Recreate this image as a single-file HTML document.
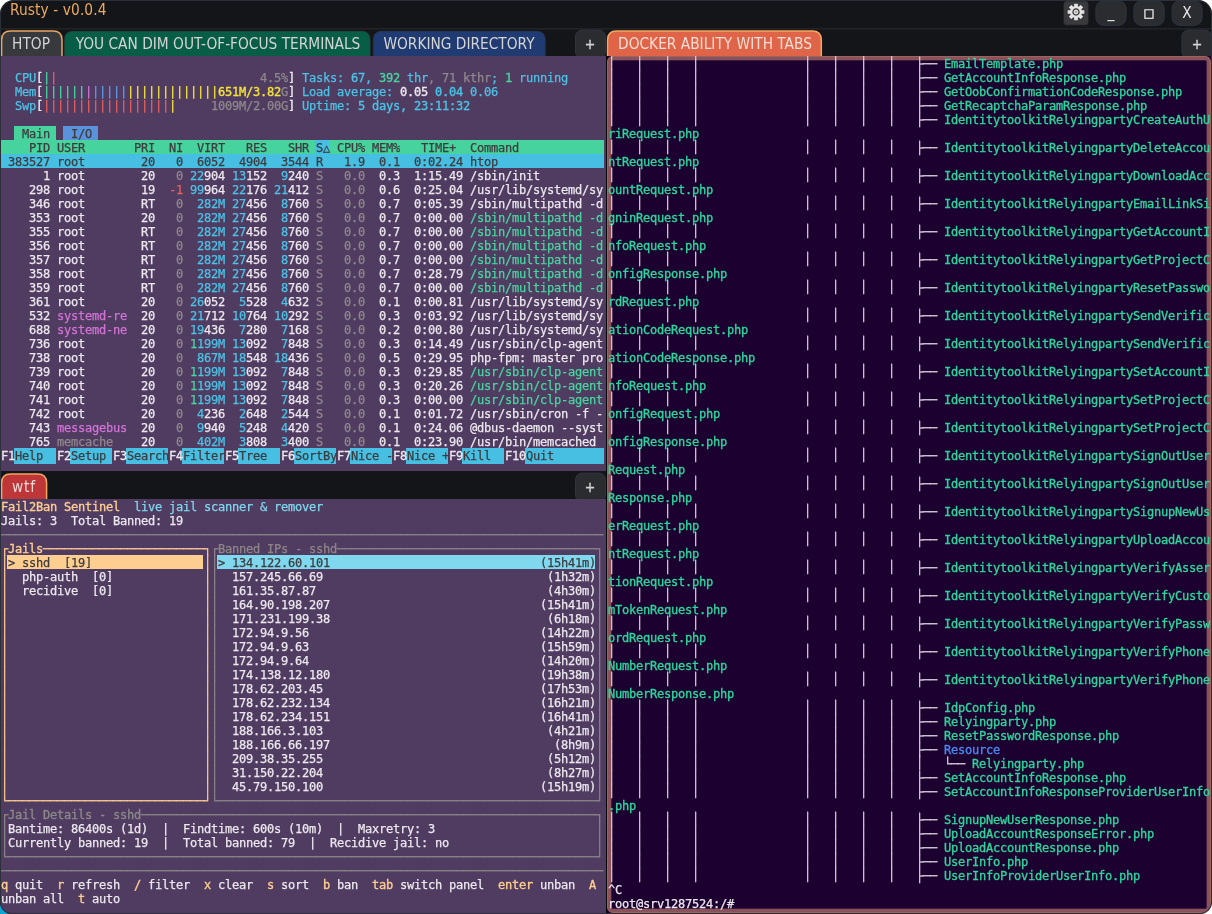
<!DOCTYPE html>
<html lang="en"><head><meta charset="utf-8"><title>Rusty - v0.0.4</title>
<style>
html,body{margin:0;padding:0;background:#fff;}
body{width:1212px;height:914px;position:relative;overflow:hidden;font-family:"DejaVu Sans Condensed","DejaVu Sans","Liberation Sans",sans-serif;}
#corner{position:absolute;left:0;top:894px;width:20px;height:20px;background:#0aa6d6;}
#win{position:absolute;left:0;top:0;width:1212px;height:914px;box-sizing:border-box;background:#141519;border-radius:14px 14px 12px 12px;overflow:hidden;}
#frame{position:absolute;left:0;top:0;width:1212px;height:914px;box-sizing:border-box;border:1px solid #2b303b;border-radius:14px 14px 12px 12px;z-index:50;pointer-events:none;}
#chrome{position:absolute;left:0;top:0;}
#title{will-change:transform;position:absolute;left:10px;top:0;height:20px;line-height:20px;font-size:15.3px;letter-spacing:0.1px;color:#eaa95f;white-space:nowrap;}
.tl{will-change:transform;position:absolute;width:400px;height:25px;line-height:25px;text-align:center;white-space:nowrap;font-size:15.3px;color:#d4d4d4;}
.pl{color:#d4d4d4;letter-spacing:0;font-size:14px;-webkit-text-stroke:0.35px currentColor;}
.wl{color:#e6e6e6;letter-spacing:0;line-height:22px;height:22px;}
.term{position:absolute;overflow:hidden;will-change:transform;font-family:"DejaVu Sans Mono","Liberation Mono",monospace;font-size:12px;line-height:14px;letter-spacing:-0.2246px;white-space:pre;}
.term .r{position:absolute;left:0;height:14px;width:100%;}
.term .r span{position:absolute;top:1px;height:14px;margin-left:1px;-webkit-text-stroke:0.25px currentColor;}
.term .k{position:absolute;top:0;display:block;}
.term .r span.vb{top:0;}
.term .r span.bd{-webkit-text-stroke:0.34px currentColor;}
#t1{left:0;top:56px;width:605.5px;height:415px;background:#503b61;}
#t2{left:0;top:499px;width:605.5px;height:415px;background:#503b61;}
#t3{left:607px;top:56px;width:604px;height:857px;background:#1b0030;}
#t3 .in{position:absolute;left:0;top:0;width:604px;height:857px;}
#t3b{position:absolute;left:0;top:0;width:604px;height:857px;box-sizing:border-box;border:4px solid #8a525a;box-shadow:inset 0 0 0 0.8px rgba(138,82,90,0.45);border-radius:6px;}
#t3b::after{content:'';position:absolute;left:-4px;top:-4px;width:604px;height:857px;box-sizing:border-box;border:1px solid rgba(190,124,100,0.4);border-radius:6px;}
#gap{position:absolute;left:605.5px;top:56px;width:1.5px;height:858px;background:#08080b;}
.f-w{color:#ece8ee}
.f-c{color:#4cc3e6}
.f-g{color:#48d6a0}
.f-s{color:#8f888c}
.f-r{color:#ea605c}
.f-m{color:#d274d6}
.f-y{color:#f2e23c}
.f-b{color:#5b9cec}
.f-d{color:#3d3c3f}
.f-o{color:#fece91}
.f-l{color:#7fd8ee}
.f-G{color:#8c8789}
.f-t{color:#2fd59b}
.f-B{color:#4b8af0}
.f-L{color:#dad3dc}
.f-W{color:#ece6ee}
</style></head><body>
<div id="corner"></div>
<div id="win">
<svg id="chrome" width="1212" height="914" viewBox="0 0 1212 914"><rect x="0" y="28" width="1212" height="1.6" fill="#222326"/><rect x="1064" y="1.6" width="24" height="23.2" rx="2.5" fill="#3a3a3c" stroke="#32363e" stroke-width="0.8"/><g transform="translate(1076.00 12.00)"><g fill="#e3e3e3"><rect x="-1.85" y="-8.3" width="3.7" height="16.6" rx="0.5" transform="rotate(0)"/><rect x="-1.85" y="-8.3" width="3.7" height="16.6" rx="0.5" transform="rotate(45)"/><rect x="-1.85" y="-8.3" width="3.7" height="16.6" rx="0.5" transform="rotate(90)"/><rect x="-1.85" y="-8.3" width="3.7" height="16.6" rx="0.5" transform="rotate(135)"/><circle r="6"/></g><circle r="3.05" fill="none" stroke="#303032" stroke-width="1.25"/><circle r="0.9" fill="#8c8c8c"/></g><rect x="1095.90" y="0.90" width="30.20" height="24.40" rx="7.5" fill="#2a2c30" stroke="#2f3540" stroke-width="1"/><rect x="1133.90" y="0.90" width="30.30" height="24.40" rx="7.5" fill="#2a2c30" stroke="#2f3540" stroke-width="1"/><rect x="1172.10" y="0.90" width="30.00" height="24.40" rx="7.5" fill="#2a2c30" stroke="#2f3540" stroke-width="1"/><path d="M1.60 57.00V40.00Q1.60 31.00 10.60 31.00H53.00Q62.00 31.00 62.00 40.00V57.00Z" fill="#38393d" stroke="#e8a760" stroke-width="1.5"/><path d="M64.30 57.10V40.10Q64.30 31.10 73.30 31.10H361.30Q370.30 31.10 370.30 40.10V57.10Z" fill="#085d46" stroke="#2c3038" stroke-width="0.6"/><path d="M373.20 57.10V40.10Q373.20 31.10 382.20 31.10H536.40Q545.40 31.10 545.40 40.10V57.10Z" fill="#203b71" stroke="#2c3038" stroke-width="0.6"/><rect x="575.50" y="30.10" width="30.00" height="28.00" rx="6.5" fill="#2a2c30" stroke="#30353e" stroke-width="1"/><path d="M607.60 57.00V40.00Q607.60 31.00 616.60 31.00H812.30Q821.30 31.00 821.30 40.00V57.00Z" fill="#e06548" stroke="#f4a75f" stroke-width="1.5"/><rect x="1181.90" y="30.10" width="29.60" height="28.00" rx="6.5" fill="#2a2c30" stroke="#30353e" stroke-width="1"/><path d="M1.60 500.00V483.00Q1.60 474.00 10.60 474.00H37.60Q46.60 474.00 46.60 483.00V500.00Z" fill="#be3638" stroke="#f4a75f" stroke-width="1.5"/><rect x="575.50" y="473.10" width="30.00" height="28.00" rx="6.5" fill="#2a2c30" stroke="#30353e" stroke-width="1"/></svg>
<div id="title">Rusty - v0.0.4</div>
<div class="tl" style="left:-169.2px;top:32px;">HTOP</div>
<div class="tl" style="left:17.6px;top:32px;">YOU CAN DIM OUT-OF-FOCUS TERMINALS</div>
<div class="tl" style="left:259.0px;top:32px;">WORKING DIRECTORY</div>
<div class="tl" style="left:514.8px;top:32px;color:#f4ddd6;">DOCKER ABILITY WITH TABS</div>
<div class="tl" style="left:-175.7px;top:475px;color:#f2d8d8;letter-spacing:0.9px;">wtf</div>
<div class="tl pl" style="left:390.2px;top:32px;">+</div>
<div class="tl pl" style="left:997.0px;top:32px;">+</div>
<div class="tl pl" style="left:390.2px;top:475px;">+</div>
<div class="tl wl" style="left:911.0px;top:1px;">_</div>
<div class="tl wl" style="left:949.0px;top:2px;font-family:'DejaVu Sans',sans-serif;font-size:11.5px;letter-spacing:0;-webkit-text-stroke:0.4px currentColor;">□</div>
<div class="tl wl" style="left:986.8px;top:2px;">X</div>
<div id="gap"></div>
<div class="term" id="t1">
<div class="r" style="top:14px"><span class="f-c" style="left:14px">CPU</span><span class="f-w bd" style="left:35px">[</span><span class="f-g" style="left:42px">|</span><span class="f-r" style="left:49px">|</span> <span class="f-s" style="left:259px">4.5%</span><span class="f-w bd" style="left:287px">]</span> <span class="f-c" style="left:301px">Tasks: </span> <span class="f-c bd" style="left:350px">67</span><span class="f-c" style="left:364px">, </span> <span class="f-g bd" style="left:378px">392</span><span class="f-c" style="left:399px"> thr</span><span class="f-s" style="left:427px">, 71 kthr</span><span class="f-c" style="left:490px">; </span> <span class="f-g bd" style="left:504px">1</span><span class="f-c" style="left:511px"> running</span></div>
<div class="r" style="top:28px"><span class="f-c" style="left:14px">Mem</span><span class="f-w bd" style="left:35px">[</span><span class="f-g" style="left:42px">||||||</span><span class="f-m" style="left:84px">|</span><span class="f-b" style="left:91px">|||||</span><span class="f-y" style="left:126px">|||||||||||||</span><span class="f-y bd" style="left:217px">651M/3.82</span><span class="f-s" style="left:280px">G</span><span class="f-w bd" style="left:287px">]</span> <span class="f-c" style="left:301px">Load average: </span> <span class="f-w bd" style="left:399px">0.05</span> <span class="f-c bd" style="left:434px">0.04</span> <span class="f-c" style="left:469px">0.06</span></div>
<div class="r" style="top:42px"><span class="f-c" style="left:14px">Swp</span><span class="f-w bd" style="left:35px">[</span><span class="f-r" style="left:42px">||||||||||||||||||</span><span class="f-y" style="left:168px">|</span> <span class="f-s" style="left:210px">1009M/2.00G</span><span class="f-w bd" style="left:287px">]</span> <span class="f-c" style="left:301px">Uptime: </span> <span class="f-c bd" style="left:357px">5 days, 23:11:32</span></div>
<div class="r" style="top:70px"><i class="k" style="left:14px;width:42px;height:14px;background:#47d39d"></i><i class="k" style="left:63px;width:35px;height:14px;background:#5a93dc"></i><span class="f-d" style="left:14px"> Main </span> <span class="f-d" style="left:63px"> I/O </span></div>
<div class="r" style="top:84px"><i class="k" style="left:0px;width:604px;height:14px;background:#47d39d"></i><i class="k" style="left:315px;width:14px;height:14px;background:#46bfe2"></i><span class="f-d" style="left:28px">PID USER</span> <span class="f-d" style="left:133px">PRI</span> <span class="f-d" style="left:168px">NI</span> <span class="f-d" style="left:196px">VIRT</span> <span class="f-d" style="left:245px">RES</span> <span class="f-d" style="left:287px">SHR</span> <span class="f-d" style="left:315px">S△</span> <span class="f-d" style="left:336px">CPU% MEM%</span> <span class="f-d" style="left:420px">TIME+</span> <span class="f-d" style="left:469px">Command</span></div>
<div class="r" style="top:98px"><i class="k" style="left:0px;width:604px;height:14px;background:#46bfe2"></i><span class="f-d" style="left:7px">383527 root</span> <span class="f-d" style="left:140px">20</span> <span class="f-d" style="left:175px">0</span> <span class="f-d" style="left:196px">6052</span> <span class="f-d" style="left:238px">4904</span> <span class="f-d" style="left:280px">3544</span> <span class="f-d" style="left:315px">R</span> <span class="f-d" style="left:343px">1.9</span> <span class="f-d" style="left:378px">0.1  0:02.24 htop</span></div>
<div class="r" style="top:112px"><span class="f-w" style="left:42px">1 root</span> <span class="f-w" style="left:140px">20</span> <span class="f-s" style="left:175px">0</span> <span class="f-c" style="left:189px">22</span><span class="f-w" style="left:203px">904</span> <span class="f-c" style="left:231px">13</span><span class="f-w" style="left:245px">152</span> <span class="f-c" style="left:280px">9</span><span class="f-w" style="left:287px">240</span> <span class="f-s" style="left:315px">S</span> <span class="f-s" style="left:343px">0.0</span> <span class="f-w" style="left:378px">0.3  1:15.49 /sbin/init</span></div>
<div class="r" style="top:126px"><span class="f-w" style="left:28px">298 root</span> <span class="f-w" style="left:140px">19</span> <span class="f-r" style="left:168px">-1</span> <span class="f-c" style="left:189px">99</span><span class="f-w" style="left:203px">964</span> <span class="f-c" style="left:231px">22</span><span class="f-w" style="left:245px">176</span> <span class="f-c" style="left:273px">21</span><span class="f-w" style="left:287px">412</span> <span class="f-s" style="left:315px">S</span> <span class="f-s" style="left:343px">0.0</span> <span class="f-w" style="left:378px">0.6  0:25.04 /usr/lib/systemd/sy</span></div>
<div class="r" style="top:140px"><span class="f-w" style="left:28px">346 root</span> <span class="f-w" style="left:140px">RT</span> <span class="f-s" style="left:175px">0</span> <span class="f-c" style="left:196px">282M</span> <span class="f-c" style="left:231px">27</span><span class="f-w" style="left:245px">456</span> <span class="f-c" style="left:280px">8</span><span class="f-w" style="left:287px">760</span> <span class="f-s" style="left:315px">S</span> <span class="f-s" style="left:343px">0.0</span> <span class="f-w" style="left:378px">0.7  0:05.39 /sbin/multipathd -d</span></div>
<div class="r" style="top:154px"><span class="f-w" style="left:28px">353 root</span> <span class="f-w" style="left:140px">20</span> <span class="f-s" style="left:175px">0</span> <span class="f-c" style="left:196px">282M</span> <span class="f-c" style="left:231px">27</span><span class="f-w" style="left:245px">456</span> <span class="f-c" style="left:280px">8</span><span class="f-w" style="left:287px">760</span> <span class="f-s" style="left:315px">S</span> <span class="f-s" style="left:343px">0.0</span> <span class="f-w" style="left:378px">0.7  0:00.00</span> <span class="f-g" style="left:469px">/sbin/multipathd -d</span></div>
<div class="r" style="top:168px"><span class="f-w" style="left:28px">355 root</span> <span class="f-w" style="left:140px">RT</span> <span class="f-s" style="left:175px">0</span> <span class="f-c" style="left:196px">282M</span> <span class="f-c" style="left:231px">27</span><span class="f-w" style="left:245px">456</span> <span class="f-c" style="left:280px">8</span><span class="f-w" style="left:287px">760</span> <span class="f-s" style="left:315px">S</span> <span class="f-s" style="left:343px">0.0</span> <span class="f-w" style="left:378px">0.7  0:00.00</span> <span class="f-g" style="left:469px">/sbin/multipathd -d</span></div>
<div class="r" style="top:182px"><span class="f-w" style="left:28px">356 root</span> <span class="f-w" style="left:140px">RT</span> <span class="f-s" style="left:175px">0</span> <span class="f-c" style="left:196px">282M</span> <span class="f-c" style="left:231px">27</span><span class="f-w" style="left:245px">456</span> <span class="f-c" style="left:280px">8</span><span class="f-w" style="left:287px">760</span> <span class="f-s" style="left:315px">S</span> <span class="f-s" style="left:343px">0.0</span> <span class="f-w" style="left:378px">0.7  0:00.00</span> <span class="f-g" style="left:469px">/sbin/multipathd -d</span></div>
<div class="r" style="top:196px"><span class="f-w" style="left:28px">357 root</span> <span class="f-w" style="left:140px">RT</span> <span class="f-s" style="left:175px">0</span> <span class="f-c" style="left:196px">282M</span> <span class="f-c" style="left:231px">27</span><span class="f-w" style="left:245px">456</span> <span class="f-c" style="left:280px">8</span><span class="f-w" style="left:287px">760</span> <span class="f-s" style="left:315px">S</span> <span class="f-s" style="left:343px">0.0</span> <span class="f-w" style="left:378px">0.7  0:00.00</span> <span class="f-g" style="left:469px">/sbin/multipathd -d</span></div>
<div class="r" style="top:210px"><span class="f-w" style="left:28px">358 root</span> <span class="f-w" style="left:140px">RT</span> <span class="f-s" style="left:175px">0</span> <span class="f-c" style="left:196px">282M</span> <span class="f-c" style="left:231px">27</span><span class="f-w" style="left:245px">456</span> <span class="f-c" style="left:280px">8</span><span class="f-w" style="left:287px">760</span> <span class="f-s" style="left:315px">S</span> <span class="f-s" style="left:343px">0.0</span> <span class="f-w" style="left:378px">0.7  0:28.79</span> <span class="f-g" style="left:469px">/sbin/multipathd -d</span></div>
<div class="r" style="top:224px"><span class="f-w" style="left:28px">359 root</span> <span class="f-w" style="left:140px">RT</span> <span class="f-s" style="left:175px">0</span> <span class="f-c" style="left:196px">282M</span> <span class="f-c" style="left:231px">27</span><span class="f-w" style="left:245px">456</span> <span class="f-c" style="left:280px">8</span><span class="f-w" style="left:287px">760</span> <span class="f-s" style="left:315px">S</span> <span class="f-s" style="left:343px">0.0</span> <span class="f-w" style="left:378px">0.7  0:00.00</span> <span class="f-g" style="left:469px">/sbin/multipathd -d</span></div>
<div class="r" style="top:238px"><span class="f-w" style="left:28px">361 root</span> <span class="f-w" style="left:140px">20</span> <span class="f-s" style="left:175px">0</span> <span class="f-c" style="left:189px">26</span><span class="f-w" style="left:203px">052</span> <span class="f-c" style="left:238px">5</span><span class="f-w" style="left:245px">528</span> <span class="f-c" style="left:280px">4</span><span class="f-w" style="left:287px">632</span> <span class="f-s" style="left:315px">S</span> <span class="f-s" style="left:343px">0.0</span> <span class="f-w" style="left:378px">0.1  0:00.81 /usr/lib/systemd/sy</span></div>
<div class="r" style="top:252px"><span class="f-w" style="left:28px">532</span> <span class="f-m" style="left:56px">systemd-re</span> <span class="f-w" style="left:140px">20</span> <span class="f-s" style="left:175px">0</span> <span class="f-c" style="left:189px">21</span><span class="f-w" style="left:203px">712</span> <span class="f-c" style="left:231px">10</span><span class="f-w" style="left:245px">764</span> <span class="f-c" style="left:273px">10</span><span class="f-w" style="left:287px">292</span> <span class="f-s" style="left:315px">S</span> <span class="f-s" style="left:343px">0.0</span> <span class="f-w" style="left:378px">0.3  0:03.92 /usr/lib/systemd/sy</span></div>
<div class="r" style="top:266px"><span class="f-w" style="left:28px">688</span> <span class="f-m" style="left:56px">systemd-ne</span> <span class="f-w" style="left:140px">20</span> <span class="f-s" style="left:175px">0</span> <span class="f-c" style="left:189px">19</span><span class="f-w" style="left:203px">436</span> <span class="f-c" style="left:238px">7</span><span class="f-w" style="left:245px">280</span> <span class="f-c" style="left:280px">7</span><span class="f-w" style="left:287px">168</span> <span class="f-s" style="left:315px">S</span> <span class="f-s" style="left:343px">0.0</span> <span class="f-w" style="left:378px">0.2  0:00.80 /usr/lib/systemd/sy</span></div>
<div class="r" style="top:280px"><span class="f-w" style="left:28px">736 root</span> <span class="f-w" style="left:140px">20</span> <span class="f-s" style="left:175px">0</span> <span class="f-g" style="left:189px">1</span><span class="f-c" style="left:196px">199M</span> <span class="f-c" style="left:231px">13</span><span class="f-w" style="left:245px">092</span> <span class="f-c" style="left:280px">7</span><span class="f-w" style="left:287px">848</span> <span class="f-s" style="left:315px">S</span> <span class="f-s" style="left:343px">0.0</span> <span class="f-w" style="left:378px">0.3  0:14.49 /usr/sbin/clp-agent</span></div>
<div class="r" style="top:294px"><span class="f-w" style="left:28px">738 root</span> <span class="f-w" style="left:140px">20</span> <span class="f-s" style="left:175px">0</span> <span class="f-c" style="left:196px">867M</span> <span class="f-c" style="left:231px">18</span><span class="f-w" style="left:245px">548</span> <span class="f-c" style="left:273px">18</span><span class="f-w" style="left:287px">436</span> <span class="f-s" style="left:315px">S</span> <span class="f-s" style="left:343px">0.0</span> <span class="f-w" style="left:378px">0.5  0:29.95 php-fpm: master pro</span></div>
<div class="r" style="top:308px"><span class="f-w" style="left:28px">739 root</span> <span class="f-w" style="left:140px">20</span> <span class="f-s" style="left:175px">0</span> <span class="f-g" style="left:189px">1</span><span class="f-c" style="left:196px">199M</span> <span class="f-c" style="left:231px">13</span><span class="f-w" style="left:245px">092</span> <span class="f-c" style="left:280px">7</span><span class="f-w" style="left:287px">848</span> <span class="f-s" style="left:315px">S</span> <span class="f-s" style="left:343px">0.0</span> <span class="f-w" style="left:378px">0.3  0:29.85</span> <span class="f-g" style="left:469px">/usr/sbin/clp-agent</span></div>
<div class="r" style="top:322px"><span class="f-w" style="left:28px">740 root</span> <span class="f-w" style="left:140px">20</span> <span class="f-s" style="left:175px">0</span> <span class="f-g" style="left:189px">1</span><span class="f-c" style="left:196px">199M</span> <span class="f-c" style="left:231px">13</span><span class="f-w" style="left:245px">092</span> <span class="f-c" style="left:280px">7</span><span class="f-w" style="left:287px">848</span> <span class="f-s" style="left:315px">S</span> <span class="f-s" style="left:343px">0.0</span> <span class="f-w" style="left:378px">0.3  0:20.26</span> <span class="f-g" style="left:469px">/usr/sbin/clp-agent</span></div>
<div class="r" style="top:336px"><span class="f-w" style="left:28px">741 root</span> <span class="f-w" style="left:140px">20</span> <span class="f-s" style="left:175px">0</span> <span class="f-g" style="left:189px">1</span><span class="f-c" style="left:196px">199M</span> <span class="f-c" style="left:231px">13</span><span class="f-w" style="left:245px">092</span> <span class="f-c" style="left:280px">7</span><span class="f-w" style="left:287px">848</span> <span class="f-s" style="left:315px">S</span> <span class="f-s" style="left:343px">0.0</span> <span class="f-w" style="left:378px">0.3  0:00.00</span> <span class="f-g" style="left:469px">/usr/sbin/clp-agent</span></div>
<div class="r" style="top:350px"><span class="f-w" style="left:28px">742 root</span> <span class="f-w" style="left:140px">20</span> <span class="f-s" style="left:175px">0</span> <span class="f-c" style="left:196px">4</span><span class="f-w" style="left:203px">236</span> <span class="f-c" style="left:238px">2</span><span class="f-w" style="left:245px">648</span> <span class="f-c" style="left:280px">2</span><span class="f-w" style="left:287px">544</span> <span class="f-s" style="left:315px">S</span> <span class="f-s" style="left:343px">0.0</span> <span class="f-w" style="left:378px">0.1  0:01.72 /usr/sbin/cron -f -</span></div>
<div class="r" style="top:364px"><span class="f-w" style="left:28px">743</span> <span class="f-m" style="left:56px">messagebus</span> <span class="f-w" style="left:140px">20</span> <span class="f-s" style="left:175px">0</span> <span class="f-c" style="left:196px">9</span><span class="f-w" style="left:203px">940</span> <span class="f-c" style="left:238px">5</span><span class="f-w" style="left:245px">248</span> <span class="f-c" style="left:280px">4</span><span class="f-w" style="left:287px">420</span> <span class="f-s" style="left:315px">S</span> <span class="f-s" style="left:343px">0.0</span> <span class="f-w" style="left:378px">0.1  0:24.06 @dbus-daemon --syst</span></div>
<div class="r" style="top:378px"><span class="f-w" style="left:28px">765</span> <span class="f-s" style="left:56px">memcache</span> <span class="f-w" style="left:140px">20</span> <span class="f-s" style="left:175px">0</span> <span class="f-c" style="left:196px">402M</span> <span class="f-c" style="left:238px">3</span><span class="f-w" style="left:245px">808</span> <span class="f-c" style="left:280px">3</span><span class="f-w" style="left:287px">400</span> <span class="f-s" style="left:315px">S</span> <span class="f-s" style="left:343px">0.0</span> <span class="f-w" style="left:378px">0.1  0:23.90 /usr/bin/memcached</span></div>
<div class="r" style="top:392px"><i class="k" style="left:14px;width:42px;height:16px;background:#46bfe2"></i><i class="k" style="left:70px;width:42px;height:16px;background:#46bfe2"></i><i class="k" style="left:126px;width:42px;height:16px;background:#46bfe2"></i><i class="k" style="left:182px;width:42px;height:16px;background:#46bfe2"></i><i class="k" style="left:238px;width:42px;height:16px;background:#46bfe2"></i><i class="k" style="left:294px;width:42px;height:16px;background:#46bfe2"></i><i class="k" style="left:350px;width:42px;height:16px;background:#46bfe2"></i><i class="k" style="left:406px;width:42px;height:16px;background:#46bfe2"></i><i class="k" style="left:462px;width:42px;height:16px;background:#46bfe2"></i><i class="k" style="left:525px;width:79px;height:16px;background:#46bfe2"></i><span class="f-w bd" style="left:0px">F1</span><span class="f-d" style="left:14px">Help  </span> <span class="f-w bd" style="left:56px">F2</span><span class="f-d" style="left:70px">Setup </span> <span class="f-w bd" style="left:112px">F3</span><span class="f-d" style="left:126px">Search</span><span class="f-w bd" style="left:168px">F4</span><span class="f-d" style="left:182px">Filter</span><span class="f-w bd" style="left:224px">F5</span><span class="f-d" style="left:238px">Tree  </span> <span class="f-w bd" style="left:280px">F6</span><span class="f-d" style="left:294px">SortBy</span><span class="f-w bd" style="left:336px">F7</span><span class="f-d" style="left:350px">Nice -</span><span class="f-w bd" style="left:392px">F8</span><span class="f-d" style="left:406px">Nice +</span><span class="f-w bd" style="left:448px">F9</span><span class="f-d" style="left:462px">Kill  </span> <span class="f-w bd" style="left:504px">F10</span><span class="f-d" style="left:525px">Quit</span></div>
</div>
<div class="term" id="t2">
<div class="r" style="top:0px"><span class="f-o bd" style="left:0px">Fail2Ban Sentinel</span> <span class="f-l" style="left:133px">live jail scanner &amp; remover</span></div>
<div class="r" style="top:14px"><span class="f-w" style="left:0px">Jails: 3  Total Banned: 19</span></div>
<div class="r" style="top:28px"><span class="f-G" style="left:0px">──────────────────────────────────────────────────────────────────────────────────────</span></div>
<div class="r" style="top:42px"><span class="f-o" style="left:0px">┌</span><span class="f-o bd" style="left:7px">Jails</span><span class="f-o" style="left:42px">───────────────────────┐</span><span class="f-G" style="left:210px">┌</span><span class="f-G" style="left:217px">Banned IPs - sshd</span><span class="f-G" style="left:336px">─────────────────────────────────────┐</span></div>
<div class="r" style="top:56px"><i class="k" style="left:7px;width:196px;height:14px;background:#fece91"></i><i class="k" style="left:217px;width:378px;height:14px;background:#7fd8ee"></i><span class="f-o vb" style="left:0px">│</span><span class="f-d" style="left:7px">&gt; sshd  [19]</span> <span class="f-o vb" style="left:203px">│</span><span class="f-G vb" style="left:210px">│</span><span class="f-d" style="left:217px">&gt; 134.122.60.101</span> <span class="f-d" style="left:539px">(15h41m)</span><span class="f-G vb" style="left:595px">│</span></div>
<div class="r" style="top:70px"><span class="f-o vb" style="left:0px">│</span> <span class="f-w" style="left:21px">php-auth  [0]</span> <span class="f-o vb" style="left:203px">│</span><span class="f-G vb" style="left:210px">│</span> <span class="f-w" style="left:231px">157.245.66.69</span> <span class="f-w" style="left:546px">(1h32m)</span><span class="f-G vb" style="left:595px">│</span></div>
<div class="r" style="top:84px"><span class="f-o vb" style="left:0px">│</span> <span class="f-w" style="left:21px">recidive  [0]</span> <span class="f-o vb" style="left:203px">│</span><span class="f-G vb" style="left:210px">│</span> <span class="f-w" style="left:231px">161.35.87.87</span> <span class="f-w" style="left:546px">(4h30m)</span><span class="f-G vb" style="left:595px">│</span></div>
<div class="r" style="top:98px"><span class="f-o vb" style="left:0px">│</span> <span class="f-o vb" style="left:203px">│</span><span class="f-G vb" style="left:210px">│</span> <span class="f-w" style="left:231px">164.90.198.207</span> <span class="f-w" style="left:539px">(15h41m)</span><span class="f-G vb" style="left:595px">│</span></div>
<div class="r" style="top:112px"><span class="f-o vb" style="left:0px">│</span> <span class="f-o vb" style="left:203px">│</span><span class="f-G vb" style="left:210px">│</span> <span class="f-w" style="left:231px">171.231.199.38</span> <span class="f-w" style="left:546px">(6h18m)</span><span class="f-G vb" style="left:595px">│</span></div>
<div class="r" style="top:126px"><span class="f-o vb" style="left:0px">│</span> <span class="f-o vb" style="left:203px">│</span><span class="f-G vb" style="left:210px">│</span> <span class="f-w" style="left:231px">172.94.9.56</span> <span class="f-w" style="left:539px">(14h22m)</span><span class="f-G vb" style="left:595px">│</span></div>
<div class="r" style="top:140px"><span class="f-o vb" style="left:0px">│</span> <span class="f-o vb" style="left:203px">│</span><span class="f-G vb" style="left:210px">│</span> <span class="f-w" style="left:231px">172.94.9.63</span> <span class="f-w" style="left:539px">(15h59m)</span><span class="f-G vb" style="left:595px">│</span></div>
<div class="r" style="top:154px"><span class="f-o vb" style="left:0px">│</span> <span class="f-o vb" style="left:203px">│</span><span class="f-G vb" style="left:210px">│</span> <span class="f-w" style="left:231px">172.94.9.64</span> <span class="f-w" style="left:539px">(14h20m)</span><span class="f-G vb" style="left:595px">│</span></div>
<div class="r" style="top:168px"><span class="f-o vb" style="left:0px">│</span> <span class="f-o vb" style="left:203px">│</span><span class="f-G vb" style="left:210px">│</span> <span class="f-w" style="left:231px">174.138.12.180</span> <span class="f-w" style="left:539px">(19h38m)</span><span class="f-G vb" style="left:595px">│</span></div>
<div class="r" style="top:182px"><span class="f-o vb" style="left:0px">│</span> <span class="f-o vb" style="left:203px">│</span><span class="f-G vb" style="left:210px">│</span> <span class="f-w" style="left:231px">178.62.203.45</span> <span class="f-w" style="left:539px">(17h53m)</span><span class="f-G vb" style="left:595px">│</span></div>
<div class="r" style="top:196px"><span class="f-o vb" style="left:0px">│</span> <span class="f-o vb" style="left:203px">│</span><span class="f-G vb" style="left:210px">│</span> <span class="f-w" style="left:231px">178.62.232.134</span> <span class="f-w" style="left:539px">(16h21m)</span><span class="f-G vb" style="left:595px">│</span></div>
<div class="r" style="top:210px"><span class="f-o vb" style="left:0px">│</span> <span class="f-o vb" style="left:203px">│</span><span class="f-G vb" style="left:210px">│</span> <span class="f-w" style="left:231px">178.62.234.151</span> <span class="f-w" style="left:539px">(16h41m)</span><span class="f-G vb" style="left:595px">│</span></div>
<div class="r" style="top:224px"><span class="f-o vb" style="left:0px">│</span> <span class="f-o vb" style="left:203px">│</span><span class="f-G vb" style="left:210px">│</span> <span class="f-w" style="left:231px">188.166.3.103</span> <span class="f-w" style="left:546px">(4h21m)</span><span class="f-G vb" style="left:595px">│</span></div>
<div class="r" style="top:238px"><span class="f-o vb" style="left:0px">│</span> <span class="f-o vb" style="left:203px">│</span><span class="f-G vb" style="left:210px">│</span> <span class="f-w" style="left:231px">188.166.66.197</span> <span class="f-w" style="left:553px">(8h9m)</span><span class="f-G vb" style="left:595px">│</span></div>
<div class="r" style="top:252px"><span class="f-o vb" style="left:0px">│</span> <span class="f-o vb" style="left:203px">│</span><span class="f-G vb" style="left:210px">│</span> <span class="f-w" style="left:231px">209.38.35.255</span> <span class="f-w" style="left:546px">(5h12m)</span><span class="f-G vb" style="left:595px">│</span></div>
<div class="r" style="top:266px"><span class="f-o vb" style="left:0px">│</span> <span class="f-o vb" style="left:203px">│</span><span class="f-G vb" style="left:210px">│</span> <span class="f-w" style="left:231px">31.150.22.204</span> <span class="f-w" style="left:546px">(8h27m)</span><span class="f-G vb" style="left:595px">│</span></div>
<div class="r" style="top:280px"><span class="f-o vb" style="left:0px">│</span> <span class="f-o vb" style="left:203px">│</span><span class="f-G vb" style="left:210px">│</span> <span class="f-w" style="left:231px">45.79.150.100</span> <span class="f-w" style="left:539px">(15h19m)</span><span class="f-G vb" style="left:595px">│</span></div>
<div class="r" style="top:294px"><span class="f-o" style="left:0px">└────────────────────────────┘</span><span class="f-G" style="left:210px">└──────────────────────────────────────────────────────┘</span></div>
<div class="r" style="top:308px"><span class="f-G" style="left:0px">┌</span><span class="f-G bd" style="left:7px">Jail Details - sshd</span><span class="f-G" style="left:140px">─────────────────────────────────────────────────────────────────┐</span></div>
<div class="r" style="top:322px"><span class="f-G vb" style="left:0px">│</span><span class="f-w" style="left:7px">Bantime: 86400s (1d)  |  Findtime: 600s (10m)  |  Maxretry: 3</span> <span class="f-G vb" style="left:595px">│</span></div>
<div class="r" style="top:336px"><span class="f-G vb" style="left:0px">│</span><span class="f-w" style="left:7px">Currently banned: 19  |  Total banned: 79  |  Recidive jail: no</span> <span class="f-G vb" style="left:595px">│</span></div>
<div class="r" style="top:350px"><span class="f-G" style="left:0px">└────────────────────────────────────────────────────────────────────────────────────┘</span></div>
<div class="r" style="top:364px"><span class="f-G" style="left:0px">──────────────────────────────────────────────────────────────────────────────────────</span></div>
<div class="r" style="top:378px"><span class="f-o bd" style="left:0px">q</span> <span class="f-w" style="left:14px">quit</span> <span class="f-o bd" style="left:56px">r</span> <span class="f-w" style="left:70px">refresh</span> <span class="f-o bd" style="left:133px">/</span> <span class="f-w" style="left:147px">filter</span> <span class="f-o bd" style="left:203px">x</span> <span class="f-w" style="left:217px">clear</span> <span class="f-o bd" style="left:266px">s</span> <span class="f-w" style="left:280px">sort</span> <span class="f-o bd" style="left:322px">b</span> <span class="f-w" style="left:336px">ban</span> <span class="f-o bd" style="left:371px">tab</span> <span class="f-w" style="left:399px">switch panel</span> <span class="f-o bd" style="left:497px">enter</span> <span class="f-w" style="left:539px">unban</span> <span class="f-o bd" style="left:588px">A</span></div>
<div class="r" style="top:392px"><span class="f-w" style="left:0px">unban all</span> <span class="f-o bd" style="left:77px">t</span> <span class="f-w" style="left:91px">auto</span></div>
</div>
<div class="term" id="t3"><div id="t3b"></div><div class="in">
<div class="r" style="top:0px"><span class="f-L vb" style="left:0px">│   │   │   │               │   │   │   │</span> <span class="f-L" style="left:308px">├── </span> <span class="f-t bd" style="left:336px">EmailTemplate.php</span></div>
<div class="r" style="top:14px"><span class="f-L vb" style="left:0px">│   │   │   │               │   │   │   │</span> <span class="f-L" style="left:308px">├── </span> <span class="f-t bd" style="left:336px">GetAccountInfoResponse.php</span></div>
<div class="r" style="top:28px"><span class="f-L vb" style="left:0px">│   │   │   │               │   │   │   │</span> <span class="f-L" style="left:308px">├── </span> <span class="f-t bd" style="left:336px">GetOobConfirmationCodeResponse.php</span></div>
<div class="r" style="top:42px"><span class="f-L vb" style="left:0px">│   │   │   │               │   │   │   │</span> <span class="f-L" style="left:308px">├── </span> <span class="f-t bd" style="left:336px">GetRecaptchaParamResponse.php</span></div>
<div class="r" style="top:56px"><span class="f-L vb" style="left:0px">│   │   │   │               │   │   │   │</span> <span class="f-L" style="left:308px">├── </span> <span class="f-t bd" style="left:336px">IdentitytoolkitRelyingpartyCreateAuthU</span></div>
<div class="r" style="top:70px"><span class="f-t bd" style="left:0px">riRequest.php</span></div>
<div class="r" style="top:84px"><span class="f-L vb" style="left:0px">│   │   │   │               │   │   │   │</span> <span class="f-L" style="left:308px">├── </span> <span class="f-t bd" style="left:336px">IdentitytoolkitRelyingpartyDeleteAccou</span></div>
<div class="r" style="top:98px"><span class="f-t bd" style="left:0px">ntRequest.php</span></div>
<div class="r" style="top:112px"><span class="f-L vb" style="left:0px">│   │   │   │               │   │   │   │</span> <span class="f-L" style="left:308px">├── </span> <span class="f-t bd" style="left:336px">IdentitytoolkitRelyingpartyDownloadAcc</span></div>
<div class="r" style="top:126px"><span class="f-t bd" style="left:0px">ountRequest.php</span></div>
<div class="r" style="top:140px"><span class="f-L vb" style="left:0px">│   │   │   │               │   │   │   │</span> <span class="f-L" style="left:308px">├── </span> <span class="f-t bd" style="left:336px">IdentitytoolkitRelyingpartyEmailLinkSi</span></div>
<div class="r" style="top:154px"><span class="f-t bd" style="left:0px">gninRequest.php</span></div>
<div class="r" style="top:168px"><span class="f-L vb" style="left:0px">│   │   │   │               │   │   │   │</span> <span class="f-L" style="left:308px">├── </span> <span class="f-t bd" style="left:336px">IdentitytoolkitRelyingpartyGetAccountI</span></div>
<div class="r" style="top:182px"><span class="f-t bd" style="left:0px">nfoRequest.php</span></div>
<div class="r" style="top:196px"><span class="f-L vb" style="left:0px">│   │   │   │               │   │   │   │</span> <span class="f-L" style="left:308px">├── </span> <span class="f-t bd" style="left:336px">IdentitytoolkitRelyingpartyGetProjectC</span></div>
<div class="r" style="top:210px"><span class="f-t bd" style="left:0px">onfigResponse.php</span></div>
<div class="r" style="top:224px"><span class="f-L vb" style="left:0px">│   │   │   │               │   │   │   │</span> <span class="f-L" style="left:308px">├── </span> <span class="f-t bd" style="left:336px">IdentitytoolkitRelyingpartyResetPasswo</span></div>
<div class="r" style="top:238px"><span class="f-t bd" style="left:0px">rdRequest.php</span></div>
<div class="r" style="top:252px"><span class="f-L vb" style="left:0px">│   │   │   │               │   │   │   │</span> <span class="f-L" style="left:308px">├── </span> <span class="f-t bd" style="left:336px">IdentitytoolkitRelyingpartySendVerific</span></div>
<div class="r" style="top:266px"><span class="f-t bd" style="left:0px">ationCodeRequest.php</span></div>
<div class="r" style="top:280px"><span class="f-L vb" style="left:0px">│   │   │   │               │   │   │   │</span> <span class="f-L" style="left:308px">├── </span> <span class="f-t bd" style="left:336px">IdentitytoolkitRelyingpartySendVerific</span></div>
<div class="r" style="top:294px"><span class="f-t bd" style="left:0px">ationCodeResponse.php</span></div>
<div class="r" style="top:308px"><span class="f-L vb" style="left:0px">│   │   │   │               │   │   │   │</span> <span class="f-L" style="left:308px">├── </span> <span class="f-t bd" style="left:336px">IdentitytoolkitRelyingpartySetAccountI</span></div>
<div class="r" style="top:322px"><span class="f-t bd" style="left:0px">nfoRequest.php</span></div>
<div class="r" style="top:336px"><span class="f-L vb" style="left:0px">│   │   │   │               │   │   │   │</span> <span class="f-L" style="left:308px">├── </span> <span class="f-t bd" style="left:336px">IdentitytoolkitRelyingpartySetProjectC</span></div>
<div class="r" style="top:350px"><span class="f-t bd" style="left:0px">onfigRequest.php</span></div>
<div class="r" style="top:364px"><span class="f-L vb" style="left:0px">│   │   │   │               │   │   │   │</span> <span class="f-L" style="left:308px">├── </span> <span class="f-t bd" style="left:336px">IdentitytoolkitRelyingpartySetProjectC</span></div>
<div class="r" style="top:378px"><span class="f-t bd" style="left:0px">onfigResponse.php</span></div>
<div class="r" style="top:392px"><span class="f-L vb" style="left:0px">│   │   │   │               │   │   │   │</span> <span class="f-L" style="left:308px">├── </span> <span class="f-t bd" style="left:336px">IdentitytoolkitRelyingpartySignOutUser</span></div>
<div class="r" style="top:406px"><span class="f-t bd" style="left:0px">Request.php</span></div>
<div class="r" style="top:420px"><span class="f-L vb" style="left:0px">│   │   │   │               │   │   │   │</span> <span class="f-L" style="left:308px">├── </span> <span class="f-t bd" style="left:336px">IdentitytoolkitRelyingpartySignOutUser</span></div>
<div class="r" style="top:434px"><span class="f-t bd" style="left:0px">Response.php</span></div>
<div class="r" style="top:448px"><span class="f-L vb" style="left:0px">│   │   │   │               │   │   │   │</span> <span class="f-L" style="left:308px">├── </span> <span class="f-t bd" style="left:336px">IdentitytoolkitRelyingpartySignupNewUs</span></div>
<div class="r" style="top:462px"><span class="f-t bd" style="left:0px">erRequest.php</span></div>
<div class="r" style="top:476px"><span class="f-L vb" style="left:0px">│   │   │   │               │   │   │   │</span> <span class="f-L" style="left:308px">├── </span> <span class="f-t bd" style="left:336px">IdentitytoolkitRelyingpartyUploadAccou</span></div>
<div class="r" style="top:490px"><span class="f-t bd" style="left:0px">ntRequest.php</span></div>
<div class="r" style="top:504px"><span class="f-L vb" style="left:0px">│   │   │   │               │   │   │   │</span> <span class="f-L" style="left:308px">├── </span> <span class="f-t bd" style="left:336px">IdentitytoolkitRelyingpartyVerifyAsser</span></div>
<div class="r" style="top:518px"><span class="f-t bd" style="left:0px">tionRequest.php</span></div>
<div class="r" style="top:532px"><span class="f-L vb" style="left:0px">│   │   │   │               │   │   │   │</span> <span class="f-L" style="left:308px">├── </span> <span class="f-t bd" style="left:336px">IdentitytoolkitRelyingpartyVerifyCusto</span></div>
<div class="r" style="top:546px"><span class="f-t bd" style="left:0px">mTokenRequest.php</span></div>
<div class="r" style="top:560px"><span class="f-L vb" style="left:0px">│   │   │   │               │   │   │   │</span> <span class="f-L" style="left:308px">├── </span> <span class="f-t bd" style="left:336px">IdentitytoolkitRelyingpartyVerifyPassw</span></div>
<div class="r" style="top:574px"><span class="f-t bd" style="left:0px">ordRequest.php</span></div>
<div class="r" style="top:588px"><span class="f-L vb" style="left:0px">│   │   │   │               │   │   │   │</span> <span class="f-L" style="left:308px">├── </span> <span class="f-t bd" style="left:336px">IdentitytoolkitRelyingpartyVerifyPhone</span></div>
<div class="r" style="top:602px"><span class="f-t bd" style="left:0px">NumberRequest.php</span></div>
<div class="r" style="top:616px"><span class="f-L vb" style="left:0px">│   │   │   │               │   │   │   │</span> <span class="f-L" style="left:308px">├── </span> <span class="f-t bd" style="left:336px">IdentitytoolkitRelyingpartyVerifyPhone</span></div>
<div class="r" style="top:630px"><span class="f-t bd" style="left:0px">NumberResponse.php</span></div>
<div class="r" style="top:644px"><span class="f-L vb" style="left:0px">│   │   │   │               │   │   │   │</span> <span class="f-L" style="left:308px">├── </span> <span class="f-t bd" style="left:336px">IdpConfig.php</span></div>
<div class="r" style="top:658px"><span class="f-L vb" style="left:0px">│   │   │   │               │   │   │   │</span> <span class="f-L" style="left:308px">├── </span> <span class="f-t bd" style="left:336px">Relyingparty.php</span></div>
<div class="r" style="top:672px"><span class="f-L vb" style="left:0px">│   │   │   │               │   │   │   │</span> <span class="f-L" style="left:308px">├── </span> <span class="f-t bd" style="left:336px">ResetPasswordResponse.php</span></div>
<div class="r" style="top:686px"><span class="f-L vb" style="left:0px">│   │   │   │               │   │   │   │</span> <span class="f-L" style="left:308px">├── </span> <span class="f-B bd" style="left:336px">Resource</span></div>
<div class="r" style="top:700px"><span class="f-L vb" style="left:0px">│   │   │   │               │   │   │   │   │</span> <span class="f-L" style="left:336px">└── </span> <span class="f-t bd" style="left:364px">Relyingparty.php</span></div>
<div class="r" style="top:714px"><span class="f-L vb" style="left:0px">│   │   │   │               │   │   │   │</span> <span class="f-L" style="left:308px">├── </span> <span class="f-t bd" style="left:336px">SetAccountInfoResponse.php</span></div>
<div class="r" style="top:728px"><span class="f-L vb" style="left:0px">│   │   │   │               │   │   │   │</span> <span class="f-L" style="left:308px">├── </span> <span class="f-t bd" style="left:336px">SetAccountInfoResponseProviderUserInfo</span></div>
<div class="r" style="top:742px"><span class="f-t bd" style="left:0px">.php</span></div>
<div class="r" style="top:756px"><span class="f-L vb" style="left:0px">│   │   │   │               │   │   │   │</span> <span class="f-L" style="left:308px">├── </span> <span class="f-t bd" style="left:336px">SignupNewUserResponse.php</span></div>
<div class="r" style="top:770px"><span class="f-L vb" style="left:0px">│   │   │   │               │   │   │   │</span> <span class="f-L" style="left:308px">├── </span> <span class="f-t bd" style="left:336px">UploadAccountResponseError.php</span></div>
<div class="r" style="top:784px"><span class="f-L vb" style="left:0px">│   │   │   │               │   │   │   │</span> <span class="f-L" style="left:308px">├── </span> <span class="f-t bd" style="left:336px">UploadAccountResponse.php</span></div>
<div class="r" style="top:798px"><span class="f-L vb" style="left:0px">│   │   │   │               │   │   │   │</span> <span class="f-L" style="left:308px">├── </span> <span class="f-t bd" style="left:336px">UserInfo.php</span></div>
<div class="r" style="top:812px"><span class="f-L vb" style="left:0px">│   │   │   │               │   │   │   │</span> <span class="f-L" style="left:308px">├── </span> <span class="f-t bd" style="left:336px">UserInfoProviderUserInfo.php</span></div>
<div class="r" style="top:826px"><span class="f-W" style="left:0px">^C</span></div>
<div class="r" style="top:840px"><span class="f-W" style="left:0px">root@srv1287524:/#</span></div>
</div></div>
</div>
<div id="frame"></div>
</body></html>
